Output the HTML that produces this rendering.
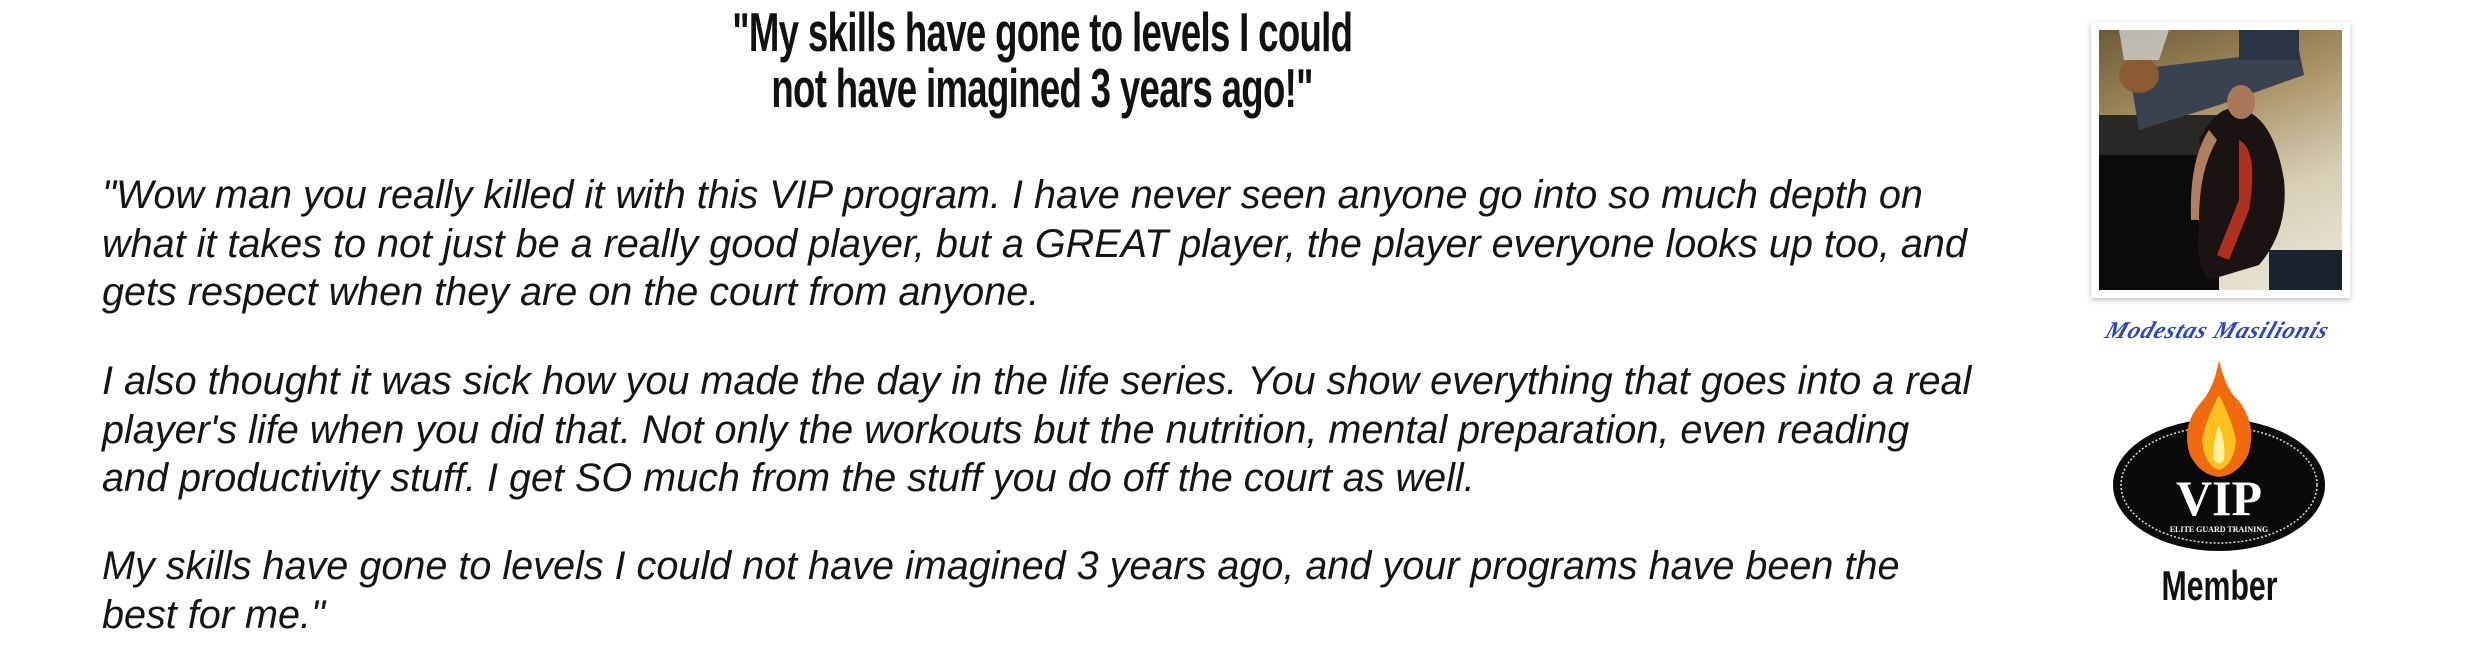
<!DOCTYPE html>
<html><head><meta charset="utf-8"><style>
html,body{margin:0;padding:0;background:#fff;}
body{width:2484px;height:672px;position:relative;overflow:hidden;}
.h{position:absolute;left:442px;width:1200px;text-align:center;top:4px;}
.h span{display:inline-block;font-family:"Liberation Sans",sans-serif;font-weight:bold;font-size:55px;line-height:56px;color:#111;transform:scaleX(0.665);transform-origin:center;white-space:nowrap;letter-spacing:-1px;}
.b{position:absolute;left:102px;font-family:"Liberation Sans",sans-serif;font-style:italic;font-size:39.6px;line-height:48.5px;color:#151515;width:2100px;white-space:nowrap;}
.frame{position:absolute;left:2091px;top:22px;width:259px;height:276px;background:#fff;box-shadow:0 2px 6px rgba(0,0,0,.25);}
.photo{position:absolute;left:8px;top:8px;width:243px;height:260px;overflow:hidden;background:linear-gradient(160deg,#6b5a3a 0%,#a48c5e 30%,#d8cfb5 65%,#ece8dc 100%);}
.mem{position:absolute;width:200px;text-align:center;top:562px;}
.mem span{display:inline-block;font-family:"Liberation Sans",sans-serif;font-weight:bold;font-size:42px;color:#111;transform:scaleX(0.72);}
.sig{position:absolute;left:2106px;top:318px;font-family:"Liberation Serif",serif;font-style:italic;font-weight:bold;font-size:24px;color:#2b45c8;letter-spacing:1px;transform:skewX(-20deg);}
</style></head><body>
<div class="h"><span>"My skills have gone to levels I could</span><br><span>not have imagined 3 years ago!"</span></div>
<div class="b" style="top:171px">"Wow man you really killed it with this VIP program. I have never seen anyone go into so much depth on<br>what it takes to not just be a really good player, but a GREAT player, the player everyone looks up too, and<br>gets respect when they are on the court from anyone.</div>
<div class="b" style="top:357px">I also thought it was sick how you made the day in the life series. You show everything that goes into a real<br>player's life when you did that. Not only the workouts but the nutrition, mental preparation, even reading<br>and productivity stuff. I get SO much from the stuff you do off the court as well.</div>
<div class="b" style="top:542px">My skills have gone to levels I could not have imagined 3 years ago, and your programs have been the<br>best for me."</div>

<div class="frame"><div class="photo">
<svg width="243" height="260" viewBox="0 0 243 260">
<rect x="0" y="110" width="120" height="150" fill="#0c0b0a"/>
<rect x="0" y="85" width="140" height="40" fill="#2a2824"/>
<polygon points="30,40 200,20 205,45 120,75 40,100" fill="#3a4250"/>
<rect x="140" y="0" width="60" height="30" fill="#2b3442"/>
<ellipse cx="40" cy="45" rx="20" ry="18" fill="#8a5a32"/>
<path d="M20 0 L70 0 L60 30 L25 30Z" fill="#cfcfcf" opacity=".8"/>
<path d="M100 110 Q120 70 145 80 Q175 90 185 150 Q190 200 160 235 L110 250 Q95 230 100 200 Q95 170 105 140Z" fill="#1a1312"/>
<path d="M140 110 Q160 120 150 180 L130 230 L118 225 L140 170Z" fill="#b03020"/>
<ellipse cx="142" cy="72" rx="14" ry="17" fill="#a9785a"/>
<path d="M110 100 Q90 130 92 190 L100 190 Q100 140 118 110Z" fill="#b07f60"/>
<rect x="170" y="220" width="73" height="40" fill="#1b2230"/>
</svg></div></div>

<div class="sig">Modestas Masilionis</div>

<svg style="position:absolute;left:2108px;top:355px" width="222" height="205" viewBox="0 0 222 205">
<ellipse cx="111" cy="130" rx="106" ry="66" fill="#0a0a0a"/>
<ellipse cx="111" cy="130" rx="98" ry="58" fill="none" stroke="#ddd" stroke-width="1.5" stroke-dasharray="2 2"/>
<path d="M111 5 Q118 35 130 45 Q150 70 140 100 Q130 120 111 122 Q92 120 82 100 Q72 70 95 45 Q106 32 111 5Z" fill="#f06a10"/>
<path d="M111 40 Q124 65 128 85 Q126 110 111 115 Q96 110 94 85 Q98 65 111 40Z" fill="#ffc020"/>
<path d="M111 70 Q118 90 116 105 Q111 112 106 105 Q104 90 111 70Z" fill="#fff3a0"/>
<text x="111" y="160" text-anchor="middle" font-family="Liberation Serif,serif" font-weight="bold" font-size="50" fill="#fff">VIP</text>
<text x="111" y="177" text-anchor="middle" font-family="Liberation Serif,serif" font-weight="bold" font-size="8" fill="#fff">ELITE GUARD TRAINING</text>
</svg>
<div class="mem" style="left:2120px"><span>Member</span></div>
</body></html>
